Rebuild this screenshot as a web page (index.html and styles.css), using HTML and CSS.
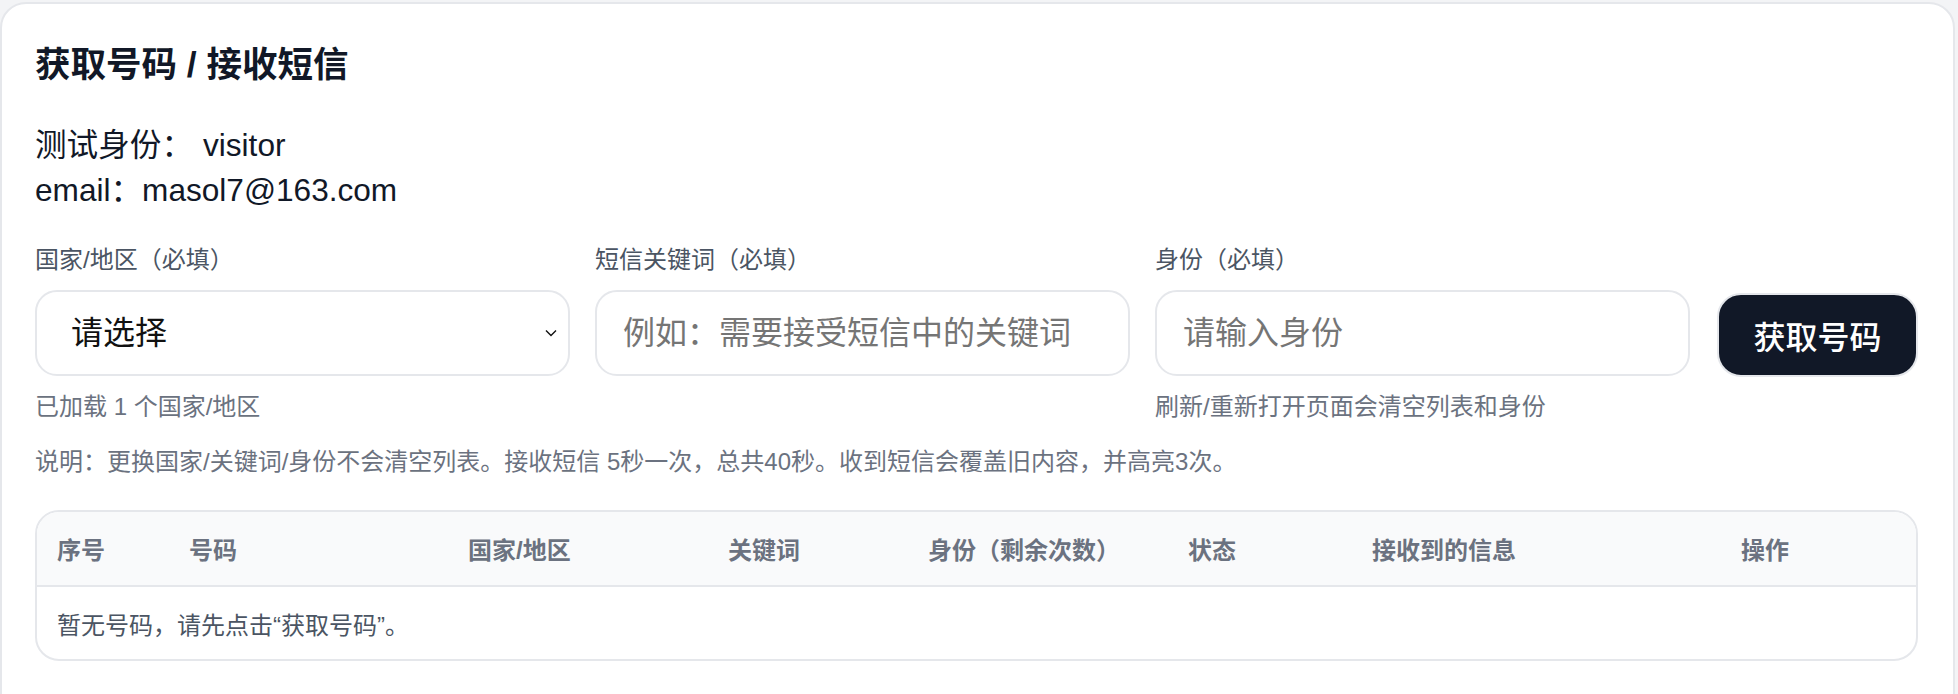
FILE: index.html
```html
<!DOCTYPE html>
<html lang="zh-CN">
<head>
  <meta charset="UTF-8">
  <meta name="viewport" content="width=device-width, initial-scale=1.0">
  <title>获取号码 / 接收短信</title>
  <link rel="stylesheet" href="styles.css">
</head>
<body>
  <!-- 主卡片 -->
  <div class="card">
    <h2 class="card-title">获取号码 / 接收短信</h2>

    <div class="user-info">
      <div>测试身份：<span class="user-name">visitor</span></div>
      <div>email：masol7@163.com</div>
    </div>

    <!-- 表单 -->
    <div class="form-row">
      <div class="field">
        <label for="country">国家/地区（必填）</label>
        <div class="select-wrap">
          <select id="country">
            <option value="">请选择</option>
          </select>
          <svg class="select-arrow" width="12" height="8" viewBox="0 0 12 8">
            <path d="M1 1.5l5 5 5-5" fill="none" stroke="#111" stroke-width="1.4"/>
          </svg>
        </div>
        <p class="hint">已加载 1 个国家/地区</p>
      </div>
      <div class="field">
        <label for="keyword">短信关键词（必填）</label>
        <input id="keyword" type="text" placeholder="例如：需要接受短信中的关键词">
      </div>
      <div class="field">
        <label for="identity">身份（必填）</label>
        <input id="identity" type="text" placeholder="请输入身份">
        <p class="hint">刷新/重新打开页面会清空列表和身份</p>
      </div>
      <button class="btn-primary">获取号码</button>
    </div>

    <p class="note">说明：更换国家/关键词/身份不会清空列表。接收短信 5秒一次，总共40秒。收到短信会覆盖旧内容，并高亮3次。</p>

    <!-- 号码列表 -->
    <div class="table-wrap">
      <table class="number-table">
        <colgroup>
          <col style="width: 132px">
          <col style="width: 279px">
          <col style="width: 260px">
          <col style="width: 200px">
          <col style="width: 260px">
          <col style="width: 184px">
          <col style="width: 369px">
          <col>
        </colgroup>
        <thead>
          <tr>
            <th>序号</th>
            <th>号码</th>
            <th>国家/地区</th>
            <th>关键词</th>
            <th>身份（剩余次数）</th>
            <th>状态</th>
            <th>接收到的信息</th>
            <th>操作</th>
          </tr>
        </thead>
        <tbody>
          <tr>
            <td colspan="8" class="empty">暂无号码，请先点击“获取号码”。</td>
          </tr>
        </tbody>
      </table>
    </div>
  </div>
</body>
</html>
```

FILE: styles.css
```css
* {
  margin: 0;
  padding: 0;
  box-sizing: border-box;
}

body {
  font-family: "Liberation Sans", "Noto Sans CJK SC", sans-serif;
  background-color: #f3f4f6;
  color: #111827;
}

/* 主卡片 */
.card {
  margin: 2px 3px 0 0;
  height: 760px;
  background-color: #fff;
  border: 2px solid #e5e7eb;
  border-radius: 26px;
  padding: 0 35px 0 33px;
}

.card-title {
  margin-top: 40px;
  font-size: 35.5px;
  line-height: 43px;
  font-weight: 700;
  color: #111827;
}

.user-info {
  margin-top: 36px;
  font-size: 31.6px;
  line-height: 45px;
  color: #111827;
}

.user-name {
  margin-left: 10px;
}

/* 表单 */
.form-row {
  margin-top: 32px;
  display: grid;
  grid-template-columns: 1fr 1fr 1fr 203px;
  column-gap: 25px;
  align-items: start;
}

.field label {
  display: block;
  font-size: 24px;
  line-height: 30px;
  color: #4b5563;
  margin-bottom: 15px;
}

.field input,
.field select {
  width: 100%;
  height: 86px;
  border: 2px solid #e5e7eb;
  border-radius: 22px;
  background: #fff;
  font-family: inherit;
  font-size: 32px;
  color: #111;
  outline: none;
}

.field input {
  padding: 0 26px;
}

.field input::placeholder {
  color: #757575;
}

.select-wrap {
  position: relative;
}

.field select {
  appearance: none;
  -webkit-appearance: none;
  padding: 0 34px;
}

.select-arrow {
  position: absolute;
  right: 13px;
  top: 39px;
}

.hint {
  margin-top: 15px;
  font-size: 24px;
  line-height: 32px;
  color: #6b7280;
}

.btn-primary {
  margin-top: 48px;
  margin-left: 2px;
  height: 84px;
  border: 2px solid #e5e7eb;
  border-radius: 24px;
  background-color: #111827;
  color: #fff;
  font-family: inherit;
  font-size: 32px;
  font-weight: 500;
  cursor: pointer;
}

.note {
  margin-top: 23px;
  font-size: 24px;
  line-height: 32px;
  color: #6b7280;
}

/* 号码列表 */
.table-wrap {
  margin-top: 32px;
  border: 2px solid #e5e7eb;
  border-radius: 24px;
  overflow: hidden;
}

.number-table {
  width: 100%;
  border-collapse: collapse;
  table-layout: fixed;
}

.number-table th {
  height: 74px;
  padding: 0 20px;
  text-align: left;
  font-size: 24px;
  font-weight: 700;
  color: #6b7280;
  background-color: #f9fafb;
  border-bottom: 2px solid #e5e7eb;
}

.number-table td.empty {
  height: 73px;
  padding: 0 20px;
  font-size: 24px;
  color: #4b5563;
}
```
